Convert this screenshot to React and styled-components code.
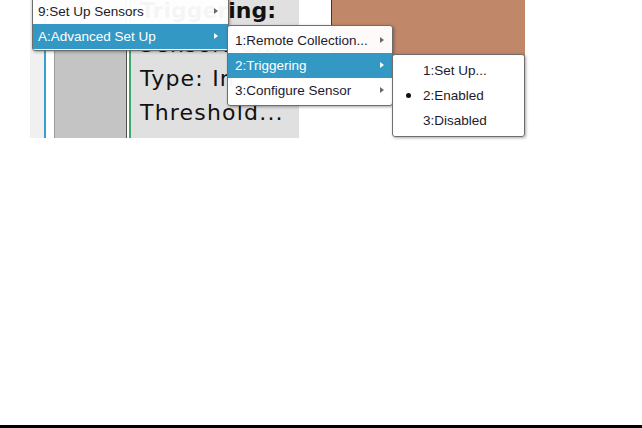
import React from "react";
import styled, { createGlobalStyle } from "styled-components";

const Global = createGlobalStyle`
  html, body { margin: 0; padding: 0; background: #ffffff; }
  body { font-family: "Liberation Sans", Arial, sans-serif; }
`;

const Page = styled.div`
  position: relative;
  width: 642px;
  height: 428px;
  display: flex;
  flex-direction: column;
  overflow: hidden;
  background: #ffffff;
`;

const Workspace = styled.div`
  display: flex;
  height: 138px;
  align-items: stretch;
`;

const Strip = styled.div`
  flex: 0 0 ${(p) => p.w}px;
  background: ${(p) => p.bg};
`;

const Sidebar = styled.div`
  flex: 0 0 71px;
  background: #c4c4c4;
  border-left: 1px solid #9c9c9c;
  border-right: 1px solid #505050;
`;

const Content = styled.div`
  flex: 0 0 159px;
  background: #e0e0e0;
  padding-left: 9px;
  overflow: hidden;
  font-family: "DejaVu Sans", Verdana, sans-serif;
  color: #111111;
  font-size: 22px;
  line-height: 34px;
  white-space: nowrap;
`;

const Lines = styled.div`
  margin-top: -6px;
`;

const Line = styled.div`
  font-weight: ${(p) => (p.bold ? 700 : 400)};
  letter-spacing: ${(p) => (p.bold ? 0 : 1.2)}px;
`;

const Canvas = styled.div`
  flex: 0 0 193px;
  align-self: flex-start;
  height: 56px;
  background: #c08769;
  border-left: 1px solid #3a3a3a;
`;

const Spacer = styled.div`
  flex: 1;
`;

const BottomBar = styled.div`
  height: 3px;
  background: #000000;
`;

const Menu = styled.div`
  position: absolute;
  left: ${(p) => p.x}px;
  top: ${(p) => p.y}px;
  width: ${(p) => p.w}px;
  box-sizing: border-box;
  padding: ${(p) => p.pad};
  background: rgba(255, 255, 255, 0.96);
  border: 1px solid #6e6e6e;
  border-radius: 3px;
  box-shadow: 1px 1px 3px rgba(0, 0, 0, 0.35);
  font-size: 13.5px;
  color: #1c1a2c;
`;

const Item = styled.div`
  position: relative;
  height: 25px;
  display: flex;
  align-items: center;
  padding-left: ${(p) => p.indent}px;
  background: ${(p) => (p.active ? "#3398c4" : "transparent")};
  color: ${(p) => (p.active ? "#ffffff" : "inherit")};
  white-space: nowrap;
`;

const Arrow = styled.span`
  position: absolute;
  right: ${(p) => p.r}px;
  top: 50%;
  margin-top: -3.5px;
  width: 0;
  height: 0;
  border-top: 3.5px solid transparent;
  border-bottom: 3.5px solid transparent;
  border-left: 4px solid ${(p) => (p.light ? "#ffffff" : "#6a6a6a")};
`;

const Bullet = styled.span`
  position: absolute;
  left: 13px;
  top: 50%;
  margin-top: -2.5px;
  width: 5px;
  height: 5px;
  border-radius: 50%;
  background: #111111;
`;

export default function App() {
  return (
    <>
      <Global />
      <Page>
        <Workspace>
          <Strip w={30} bg="#ffffff" />
          <Strip w={14} bg="#f0f0f0" />
          <Strip w={2} bg="#3a9fcf" />
          <Strip w={8} bg="#ffffff" />
          <Sidebar />
          <Strip w={2} bg="#ffffff" />
          <Strip w={2} bg="#3daa6a" />
          <Content>
            <Lines>
              <Line bold>Triggering:</Line>
              <Line>Sensor: C...</Line>
              <Line>Type: In...</Line>
              <Line>Threshold...</Line>
            </Lines>
          </Content>
          <Strip w={32} bg="#ffffff" />
          <Canvas />
        </Workspace>
        <Spacer />
        <BottomBar />

        <Menu x={32} y={-4} w={197} pad="2px 0 1px 0">
          <Item indent={5}>
            9:Set Up Sensors
            <Arrow r={10} />
          </Item>
          <Item indent={5} active>
            A:Advanced Set Up
            <Arrow r={10} light />
          </Item>
        </Menu>

        <Menu x={227} y={25} w={166} pad="2px 0">
          <Item indent={7}>
            1:Remote Collection...
            <Arrow r={8} />
          </Item>
          <Item indent={7} active>
            2:Triggering
            <Arrow r={8} light />
          </Item>
          <Item indent={7}>
            3:Configure Sensor
            <Arrow r={8} />
          </Item>
        </Menu>

        <Menu x={392} y={54} w={133} pad="3px 0">
          <Item indent={30}>1:Set Up...</Item>
          <Item indent={30}>
            <Bullet />
            2:Enabled
          </Item>
          <Item indent={30}>3:Disabled</Item>
        </Menu>
      </Page>
    </>
  );
}
